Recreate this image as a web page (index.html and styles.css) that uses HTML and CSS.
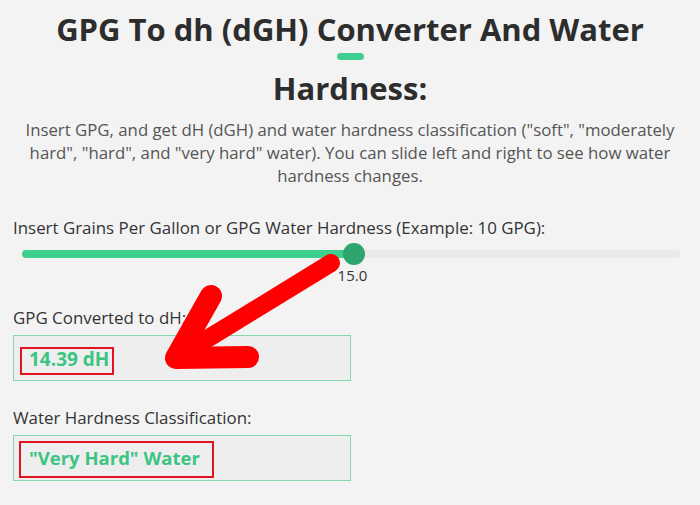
FILE: index.html
```html
<!DOCTYPE html>
<html lang="en">
<head>
    <meta charset="UTF-8">
    <meta name="viewport" content="width=device-width, initial-scale=1.0">
    <title>GPG To dh (dGH) Converter</title>
    <link rel="stylesheet" href="styles.css">
</head>
<body>
    <div class="page">
        <h1 class="title">GPG To dh (dGH) Converter And Water Hardness:<span class="title-bar"></span></h1>
        <p class="intro">Insert GPG, and get dH (dGH) and water hardness classification ("soft", "moderately hard", "hard", and "very hard" water). You can slide left and right to see how water hardness changes.</p>

        <label class="field-label">Insert Grains Per Gallon or GPG Water Hardness (Example: 10 GPG):</label>
        <div class="slider">
            <div class="slider-track">
                <div class="slider-fill" style="width: 50.4%;">
                    <span class="slider-thumb"></span>
                    <span class="slider-value">15.0</span>
                </div>
            </div>
        </div>

        <label class="field-label">GPG Converted to dH:</label>
        <div class="output">
            <span class="mark">14.39 dH</span>
        </div>

        <label class="field-label">Water Hardness Classification:</label>
        <div class="output">
            <span class="mark mark-tall">"Very Hard" Water</span>
        </div>

        <!-- red pointer arrow from the slider down to the result -->
        <svg class="arrow" width="700" height="505" viewBox="0 0 700 505">
            <polyline points="331,263 176,358" fill="none" stroke="#ff0000" stroke-width="18" stroke-linecap="round"/>
            <polyline points="211,296 176,358 248,357" fill="none" stroke="#ff0000" stroke-width="22" stroke-linecap="round" stroke-linejoin="round"/>
        </svg>
    </div>
</body>
</html>
```

FILE: styles.css
```css
body {
    margin: 0;
    background-color: #f3f3f3;
    font-family: "Open Sans", Arial, sans-serif;
    color: #333333;
}

.page {
    position: relative;
    padding: 0 13px;
    height: 505px;
    overflow: hidden;
}

.title {
    position: relative;
    margin: 0 auto;
    max-width: 640px;
    font-family: "Open Sans", Arial, sans-serif;
    font-size: 31px;
    font-weight: 700;
    line-height: 59px;
    text-align: center;
    color: #2d2d2d;
}

/* small green dash under the heading */
.title-bar {
    position: absolute;
    left: 307px;
    top: 53px;
    width: 27px;
    height: 7px;
    border-radius: 4px;
    background-color: #3ecf8e;
}

.intro {
    margin: 0;
    padding: 0 4px;
    font-size: 16.8px;
    line-height: 23px;
    text-align: center;
    color: #555555;
}

.field-label {
    display: block;
    font-size: 16.9px;
    line-height: 22px;
    color: #333333;
}

.intro + .field-label {
    margin-top: 30px;
}

.slider {
    padding: 0 7px 0 9px;
    height: 47px;
}

.slider-track {
    position: relative;
    top: 11px;
    height: 8px;
    border-radius: 4px;
    background-color: #eaeaea;
}

.slider-fill {
    position: relative;
    height: 8px;
    border-radius: 4px;
    background-color: #3ecf8e;
}

.slider-thumb {
    position: absolute;
    right: -11px;
    top: -7px;
    width: 22px;
    height: 22px;
    border-radius: 50%;
    background-color: #2ea56f;
}

.slider-value {
    position: absolute;
    left: 100%;
    top: 16px;
    transform: translateX(-54%);
    font-size: 15px;
    line-height: 18px;
    color: #333333;
}

.slider + .field-label {
    margin-top: 21px;
}

.output {
    display: flex;
    align-items: flex-start;
    box-sizing: border-box;
    margin-top: 6px;
    width: 338px;
    height: 46px;
    padding-left: 6px;
    border: 1px solid #86d9ad;
    background-color: #eeeeee;
}

.output + .field-label {
    margin-top: 26px;
}

.mark {
    margin-top: 11px;
    padding: 0 3px 4px 7px;
    border: 2px solid #e0141e;
    font-size: 19px;
    font-weight: 700;
    line-height: 20px;
    color: #3cc483;
}

.mark-tall {
    margin-top: 5px;
    margin-left: -1px;
    padding: 5px 12px 8px 8px;
    font-size: 18.5px;
}

.arrow {
    position: absolute;
    left: 0;
    top: 0;
    pointer-events: none;
}
```
